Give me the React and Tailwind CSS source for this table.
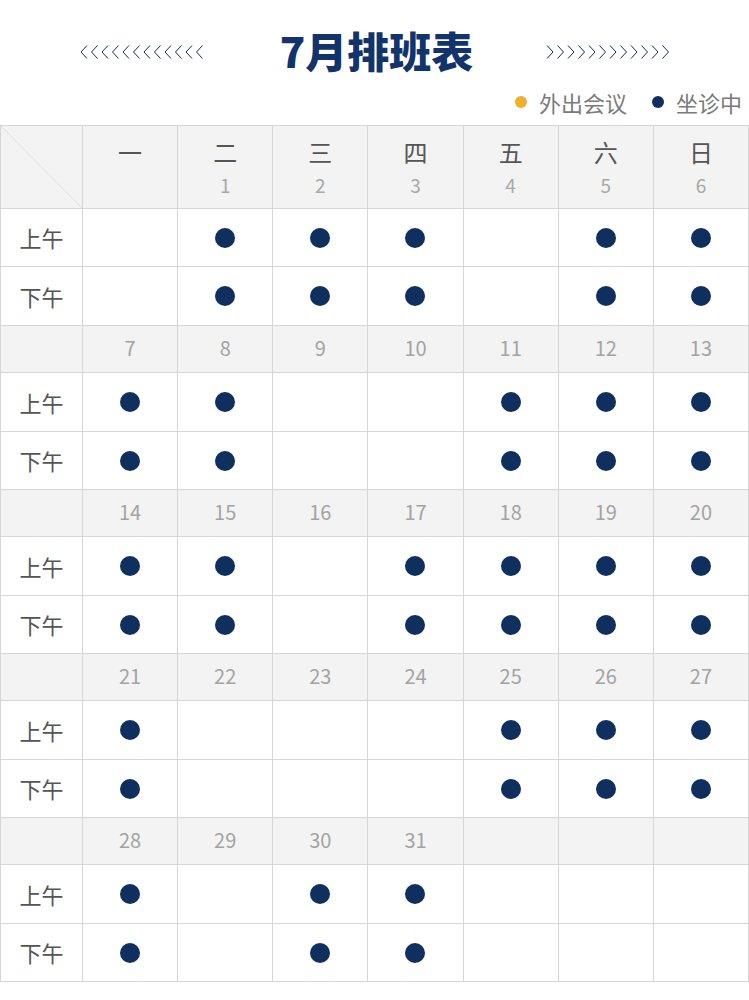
import React from "react";

const NAVY = "#0f2f5e";
const days = ["一", "二", "三", "四", "五", "六", "日"];

const weeks = [
  { dates: ["", "1", "2", "3", "4", "5", "6"], on: [0, 1, 1, 1, 0, 1, 1] },
  { dates: ["7", "8", "9", "10", "11", "12", "13"], on: [1, 1, 0, 0, 1, 1, 1] },
  { dates: ["14", "15", "16", "17", "18", "19", "20"], on: [1, 1, 0, 1, 1, 1, 1] },
  { dates: ["21", "22", "23", "24", "25", "26", "27"], on: [1, 0, 0, 0, 1, 1, 1] },
  { dates: ["28", "29", "30", "31", "", "", ""], on: [1, 0, 1, 1, 0, 0, 0] },
];

function Chevrons({ dir }) {
  const items = Array.from({ length: 12 });
  return (
    <svg width="128" height="16" viewBox="0 0 128 16" className="block">
      {items.map((_, i) => {
        const x = i * 10.5 + 1;
        const pts =
          dir === "left"
            ? `${x + 6},1.5 ${x},8 ${x + 6},14.5`
            : `${x},1.5 ${x + 6},8 ${x},14.5`;
        return <polyline key={i} points={pts} fill="none" stroke={NAVY} strokeWidth="1" />;
      })}
    </svg>
  );
}

function Dot() {
  return <span className="block w-[20px] h-[20px] rounded-full bg-[#0f2f5e]" />;
}

const cell = "border-r border-b border-[#d6d6d6] flex items-center justify-center";

export default function App() {
  return (
    <div
      className="w-[749px] bg-white"
      style={{ fontFamily: '"Noto Sans CJK SC", "Noto Sans", sans-serif' }}
    >
      <div className="h-[88px] flex items-center justify-center">
        <div className="w-[128px] ml-[10px] pt-[16px]">
          <Chevrons dir="left" />
        </div>
        <div className="w-[338px] text-center text-[42px] font-black text-[#13346a] leading-none pt-[12px]">
          7月排班表
        </div>
        <div className="w-[128px] mr-[6px] pt-[16px]">
          <Chevrons dir="right" />
        </div>
      </div>
      <div className="h-[37px] flex items-start justify-end pr-[7px] text-[22px] text-[#7a7a7a] leading-none">
        <div className="flex items-center gap-[12px] mr-[25px] pt-[3px]">
          <span className="block w-[12px] h-[12px] rounded-full bg-[#efb12b]" />
          <span>外出会议</span>
        </div>
        <div className="flex items-center gap-[12px] pt-[3px]">
          <span className="block w-[12px] h-[12px] rounded-full bg-[#0f2f5e]" />
          <span>坐诊中</span>
        </div>
      </div>

      <div className="grid grid-cols-[82px_repeat(7,1fr)] border-l border-t border-[#d6d6d6]">
        <div className={`${cell} relative h-[83px] bg-[#f3f3f3]`}>
          <svg className="absolute inset-0" width="81" height="82" viewBox="0 0 81 82">
            <line x1="0" y1="0" x2="81" y2="82" stroke="#dedede" strokeWidth="1" />
          </svg>
        </div>
        {days.map((d, i) => (
          <div
            key={d}
            className="h-[83px] bg-[#f3f3f3] border-r border-b border-[#d6d6d6] flex flex-col items-center pt-[9px]"
          >
            <span className="text-[24px] leading-[34px] text-[#555]">{d}</span>
            <span className="text-[19px] leading-[32px] text-[#a8a8a8]">{weeks[0].dates[i]}</span>
          </div>
        ))}

        {weeks.map((w, wi) => (
          <React.Fragment key={wi}>
            {wi > 0 && (
              <>
                <div className={`${cell} h-[47px] bg-[#f3f3f3]`} />
                {w.dates.map((d, i) => (
                  <div
                    key={i}
                    className={`${cell} h-[47px] bg-[#f3f3f3] text-[20px] text-[#a3a3a3] pb-[2px]`}
                  >
                    {d}
                  </div>
                ))}
              </>
            )}
            {["上午", "下午"].map((label, ri) => {
              const h = ri === 0 ? (wi === 0 ? "h-[58px]" : "h-[59px]") : wi === 0 ? "h-[59px]" : "h-[58px]";
              return (
                <React.Fragment key={label}>
                  <div className={`${cell} ${h} text-[22px] text-[#555]`}>{label}</div>
                  {w.on.map((o, i) => (
                    <div key={i} className={`${cell} ${h}`}>
                      {o ? <Dot /> : null}
                    </div>
                  ))}
                </React.Fragment>
              );
            })}
          </React.Fragment>
        ))}
      </div>
      <div className="h-[19px]" />
    </div>
  );
}
